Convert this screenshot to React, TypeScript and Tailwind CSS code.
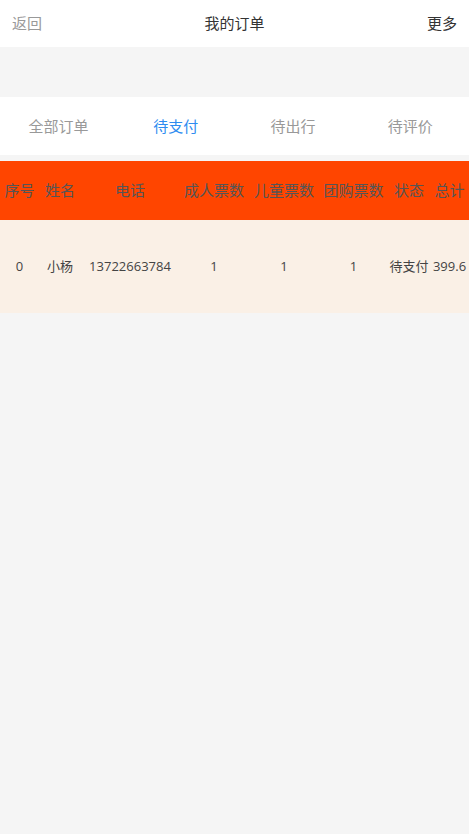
import React, { useState } from 'react';

const tabs = ['全部订单', '待支付', '待出行', '待评价'];

const columns = [
  { title: '序号', width: 'w-[39px]' },
  { title: '姓名', width: 'w-[42px]' },
  { title: '电话', width: 'w-[98px]' },
  { title: '成人票数', width: 'w-[70px]' },
  { title: '儿童票数', width: 'w-[70px]' },
  { title: '团购票数', width: 'w-[69px]' },
  { title: '状态', width: 'w-[42px]' },
  { title: '总计', width: 'w-[39px]' }
];

const orders = [
  ['0', '小杨', '13722663784', '1', '1', '1', '待支付', '399.6']
];

export default function App() {
  const [active, setActive] = useState(1);

  return (
    <div className="min-h-[834px] bg-[#f5f5f5] font-['Open_Sans','Noto_Sans_CJK_SC',sans-serif]">
      <header className="flex h-[47px] items-center justify-between bg-white px-[12px] text-[15px]">
        <span className="text-[#999]">返回</span>
        <span className="text-[#333]">我的订单</span>
        <span className="text-[#333]">更多</span>
      </header>

      <nav className="mt-[50px] grid h-[58px] grid-cols-4 items-center bg-white text-[15px]">
        {tabs.map((tab, index) => (
          <button
            key={tab}
            onClick={() => setActive(index)}
            className={index === active ? 'text-[#2d8cf0]' : 'text-[#999]'}
          >
            {tab}
          </button>
        ))}
      </nav>

      <div className="mt-[6px]">
        <div className="flex h-[59px] items-center bg-[#ff4500] text-[15px] text-[#555]">
          {columns.map((col) => (
            <div key={col.title} className={`${col.width} shrink-0 whitespace-nowrap text-center`}>
              {col.title}
            </div>
          ))}
        </div>
        {orders.map((row, i) => (
          <div key={i} className="flex h-[93px] items-center bg-[#faf0e6] text-[13px] text-[#444]">
            {row.map((cell, j) => (
              <div key={j} className={`${columns[j].width} shrink-0 whitespace-nowrap text-center`}>
                {cell}
              </div>
            ))}
          </div>
        ))}
      </div>
    </div>
  );
}
